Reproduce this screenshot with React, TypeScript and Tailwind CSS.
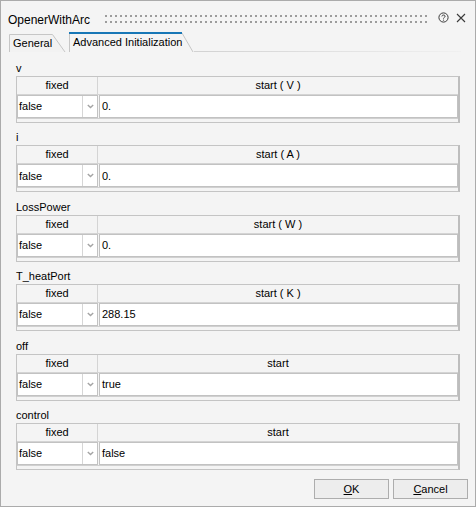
import React from "react";

type Param = { name: string; unit: string; fixed: string; start: string };

const params: Param[] = [
  { name: "v", unit: "V", fixed: "false", start: "0." },
  { name: "i", unit: "A", fixed: "false", start: "0." },
  { name: "LossPower", unit: "W", fixed: "false", start: "0." },
  { name: "T_heatPort", unit: "K", fixed: "false", start: "288.15" },
  { name: "off", unit: "", fixed: "false", start: "true" },
  { name: "control", unit: "", fixed: "false", start: "false" },
];

function Grip() {
  return (
    <svg className="flex-1 h-[12px]" aria-hidden>
      <defs>
        <pattern id="grip" width="5" height="6" patternUnits="userSpaceOnUse">
          <rect x="0" y="2" width="2" height="2" fill="#9c9c9c" />
        </pattern>
      </defs>
      <rect width="100%" height="12" fill="url(#grip)" />
    </svg>
  );
}

function ParamTable({ p }: { p: Param }) {
  return (
    <div className="flex flex-col">
      <div className="h-[16px] leading-[16px] text-[11px] text-black">{p.name}</div>
      <div className="h-[47px] border border-[#c4c4c4] border-r-2 border-r-[#bdbdbd] flex flex-col">
        <div className="h-[18px] grid grid-cols-[81px_1fr] border-b border-[#d4d4d4] text-[11px] leading-[17px]">
          <div className="text-center border-r border-[#d4d4d4]">fixed</div>
          <div className="text-center">{p.unit ? `start ( ${p.unit} )` : "start"}</div>
        </div>
        <div className="h-[24px] flex border-b border-[#d0d0d0]">
          <div className="w-[81px] flex bg-white border border-[#c2c2c2]">
            <div className="flex-1 flex items-center pl-[1px] text-[11px] border-r border-[#d6d6d6]">
              {p.fixed}
            </div>
            <div className="w-[14px] flex items-center justify-center">
              <svg width="7" height="5" viewBox="0 0 7 5" aria-hidden>
                <path d="M0.8 1 L3.5 3.6 L6.2 1" fill="none" stroke="#a4a4a4" strokeWidth="1.4" />
              </svg>
            </div>
          </div>
          <div className="w-[1px]" />
          <div className="flex-1 flex items-center bg-white border border-[#c2c2c2] pl-[2px] text-[11px]">
            {p.start}
          </div>
        </div>
        <div className="flex-1" />
      </div>
    </div>
  );
}

export default function App() {
  return (
    <div className="w-[476px] h-[507px] border border-[#ababab] bg-[#f4f4f4] flex flex-col font-['Liberation_Sans',Arial,sans-serif] text-black select-none">
      {/* title bar */}
      <div className="h-[30px] pt-[8px] flex items-center pl-[7px] pr-[9px]">
        <span className="text-[12px] leading-[14px]">OpenerWithArc</span>
        <div className="flex-1 flex ml-[15px] mr-[8px] -mt-[2px]">
          <Grip />
        </div>
        <div className="flex items-center gap-[7px] -mt-[5px]">
          <svg width="11" height="11" viewBox="0 0 11 11" aria-hidden>
            <circle cx="5.5" cy="5.5" r="4.6" fill="none" stroke="#3a3a3a" strokeWidth="1" />
            <path d="M3.9 4.4 C3.9 2.6 7.1 2.6 7.1 4.3 C7.1 5.4 5.5 5.4 5.5 6.6" fill="none" stroke="#3a3a3a" strokeWidth="1" />
            <circle cx="5.5" cy="8.1" r="0.6" fill="#3a3a3a" />
          </svg>
          <svg width="10" height="10" viewBox="0 0 10 10" aria-hidden>
            <path d="M1 1 L9 9 M9 1 L1 9" stroke="#3a3a3a" strokeWidth="1.1" />
          </svg>
        </div>
      </div>

      {/* tabs */}
      <div className="h-[21px] flex items-end pl-[8px]">
        <div className="relative w-[57px] h-[18px] text-[11px] leading-[18px] pl-[4px]">
          <svg className="absolute inset-0" width="57" height="18" aria-hidden>
            <path d="M0.5 18 V0.5 H43.5 L56 18" fill="#f2f2f2" stroke="#c6c6c6" />
          </svg>
          <span className="relative">General</span>
        </div>
        <div className="relative ml-[3px] w-[125px] h-[20px] text-[11px] leading-[20px] pl-[4px]">
          <svg className="absolute inset-0" width="125" height="20" aria-hidden>
            <path d="M0.5 20 V1 H113 L124 20" fill="#f4f4f4" stroke="#c6c6c6" />
            <path d="M0 1 H113" stroke="#1877b6" strokeWidth="2" />
          </svg>
          <span className="relative">Advanced Initialization</span>
        </div>
        <div className="flex-1 h-[1px] bg-gradient-to-r from-[#d2d2d2] to-[#f0f0f0] mr-[14px]" />
      </div>

      {/* parameter groups */}
      <div className="flex flex-col gap-[6.4px] pt-[8px] px-[15px]">
        {params.map((p) => (
          <ParamTable key={p.name} p={p} />
        ))}
      </div>

      {/* buttons */}
      <div className="flex justify-end gap-[4px] pr-[7px] mt-[9px]">
        <button className="w-[75px] h-[20px] border border-[#adadad] bg-[#ededed] text-[11px] leading-[18px]">
          <span className="underline">O</span>K
        </button>
        <button className="w-[75px] h-[20px] border border-[#adadad] bg-[#ededed] text-[11px] leading-[18px]">
          <span className="underline">C</span>ancel
        </button>
      </div>
    </div>
  );
}
